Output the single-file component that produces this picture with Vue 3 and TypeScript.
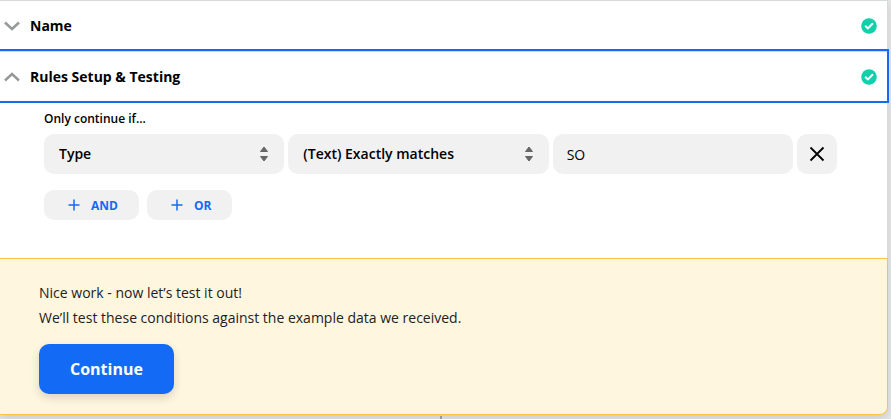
<script setup lang="ts">
import { ref } from 'vue'

const field = ref('Type')
const condition = ref('(Text) Exactly matches')
const value = ref('SO')
const sections = [
  { title: 'Name', open: false },
  { title: 'Rules Setup & Testing', open: true },
]
</script>

<template>
  <main class="page">
    <div class="card">
      <button
        v-for="section in sections"
        :key="section.title"
        type="button"
        class="section"
        :class="{ active: section.open }"
        :aria-expanded="section.open"
      >
        <svg class="chevron" viewBox="0 0 16 10" aria-hidden="true">
          <path :d="section.open ? 'M1 8.5 8 2l7 6.5' : 'M1 1.5 8 8l7-6.5'" />
        </svg>
        <span class="title">{{ section.title }}</span>
        <svg class="check" viewBox="0 0 16 16" aria-hidden="true">
          <circle cx="8" cy="8" r="7.8" />
          <path d="M4.7 8.3 7 10.4l4.4-4.6" />
        </svg>
      </button>

      <form class="rules" @submit.prevent>
        <label class="caption" for="field">Only continue if…</label>
        <div class="row">
          <div class="picker">
            <select id="field" v-model="field">
              <option>Type</option>
            </select>
            <svg class="arrows" viewBox="0 0 10 16" aria-hidden="true">
              <path d="M5 1 8.5 5.5h-7ZM5 15 8.5 10.5h-7Z" />
            </svg>
          </div>
          <div class="picker">
            <select v-model="condition" aria-label="Condition">
              <option>(Text) Exactly matches</option>
            </select>
            <svg class="arrows" viewBox="0 0 10 16" aria-hidden="true">
              <path d="M5 1 8.5 5.5h-7ZM5 15 8.5 10.5h-7Z" />
            </svg>
          </div>
          <input v-model="value" class="value" type="text" aria-label="Value" />
          <button type="button" class="remove" aria-label="Remove rule">
            <svg viewBox="0 0 14 14" aria-hidden="true">
              <path d="m.5.5 13 13M13.5.5l-13 13" />
            </svg>
          </button>
        </div>
        <div class="joins">
          <button v-for="join in ['AND', 'OR']" :key="join" type="button" class="join">
            <svg viewBox="0 0 12 12" aria-hidden="true">
              <path d="M6 .5v11M.5 6h11" />
            </svg>
            <span>{{ join }}</span>
          </button>
        </div>
      </form>

      <section class="test">
        <p>Nice work - now let’s test it out!</p>
        <p>We’ll test these conditions against the example data we received.</p>
        <button type="button" class="continue">Continue</button>
      </section>
    </div>
    <div class="connector"></div>
  </main>
</template>

<style>
body {
  background: #e5e7e9;
}
</style>

<style scoped>
.page {
  box-sizing: border-box;
  min-height: 100vh;
  padding-right: 3px;
  overflow: hidden;
  color: #000;
  font-family: "Open Sans", "Noto Sans", sans-serif;
  font-size: 14px;
}

.page * {
  box-sizing: border-box;
}

button,
select,
input {
  margin: 0;
  border: 0;
  color: inherit;
  font: inherit;
}

.card {
  border-top: 1px solid #d7dadd;
  border-right: 1px solid #d7dadd;
  border-radius: 0 0 8px 0;
  background: #fff;
  box-shadow: 0 4px 10px rgba(0, 0, 0, 0.12);
}

.section {
  display: flex;
  align-items: center;
  gap: 10px;
  width: 100%;
  height: 50px;
  padding: 0 10px 0 4px;
  background: #fff;
  font-weight: 700;
  line-height: 20px;
  text-align: left;
}

.section.active {
  position: relative;
  border-top: 1px solid #d7dadd;
  outline: 2px solid #136bf5;
}

.chevron {
  width: 16px;
  height: 10px;
  fill: none;
  stroke: #95999c;
  stroke-width: 2.4;
}

.title {
  flex: 1;
}

.check {
  width: 16px;
  height: 16px;
  fill: #13d0ac;
}

.check path {
  fill: none;
  stroke: #fff;
  stroke-width: 2;
  stroke-linecap: round;
  stroke-linejoin: round;
}

.rules {
  padding: 8px 50px 38px 44px;
}

.caption {
  display: block;
  margin-bottom: 5px;
  font-size: 12px;
  font-weight: 600;
  line-height: 20px;
}

.row {
  display: grid;
  grid-template-columns: 12fr 13fr 12fr 40px;
  gap: 4px;
}

.picker {
  position: relative;
  min-width: 0;
}

select,
.value,
.remove {
  height: 40px;
  border-radius: 10px;
  background: #f1f1f1;
}

select {
  display: block;
  width: 100%;
  padding: 0 36px 2px 15px;
  appearance: none;
  font-weight: 600;
}

.arrows {
  position: absolute;
  top: 12px;
  right: 15px;
  width: 10px;
  height: 16px;
  fill: #666;
  stroke: #666;
  stroke-linejoin: round;
  pointer-events: none;
}

.value {
  width: 100%;
  min-width: 0;
  padding: 0 14px;
}

.remove {
  display: grid;
  place-items: center;
  padding: 0;
}

.remove svg {
  width: 14px;
  height: 14px;
  overflow: visible;
  stroke: #000;
  stroke-width: 1.8;
}

.joins {
  display: flex;
  gap: 8px;
  margin-top: 16px;
}

.join {
  display: flex;
  align-items: center;
  gap: 11px;
  height: 30px;
  padding: 0 21px 0 24px;
  border-radius: 10px;
  background: #f1f1f1;
  color: #136bf5;
  font-size: 12px;
  font-weight: 700;
}

.join svg {
  width: 12px;
  height: 12px;
  stroke: currentColor;
  stroke-width: 1.5;
}

.test {
  margin-right: -1px;
  padding: 21px 39px 20px;
  border: 1px solid #fec240;
  border-left: 0;
  border-radius: 0 0 8px 0;
  background: #fff6df;
}

.test p {
  margin: 0;
  color: #222;
  line-height: 25px;
}

.continue {
  height: 50px;
  margin-top: 14px;
  padding: 0 31px;
  border-radius: 10px;
  background: #136bf5;
  box-shadow: 0 4px 10px rgba(0, 0, 0, 0.14);
  color: #fff;
  font-size: 16px;
  font-weight: 700;
}

.connector {
  width: 2px;
  height: 3px;
  margin: 1px 0 0 calc(50% - 4px);
  background: #95999c;
}
</style>
